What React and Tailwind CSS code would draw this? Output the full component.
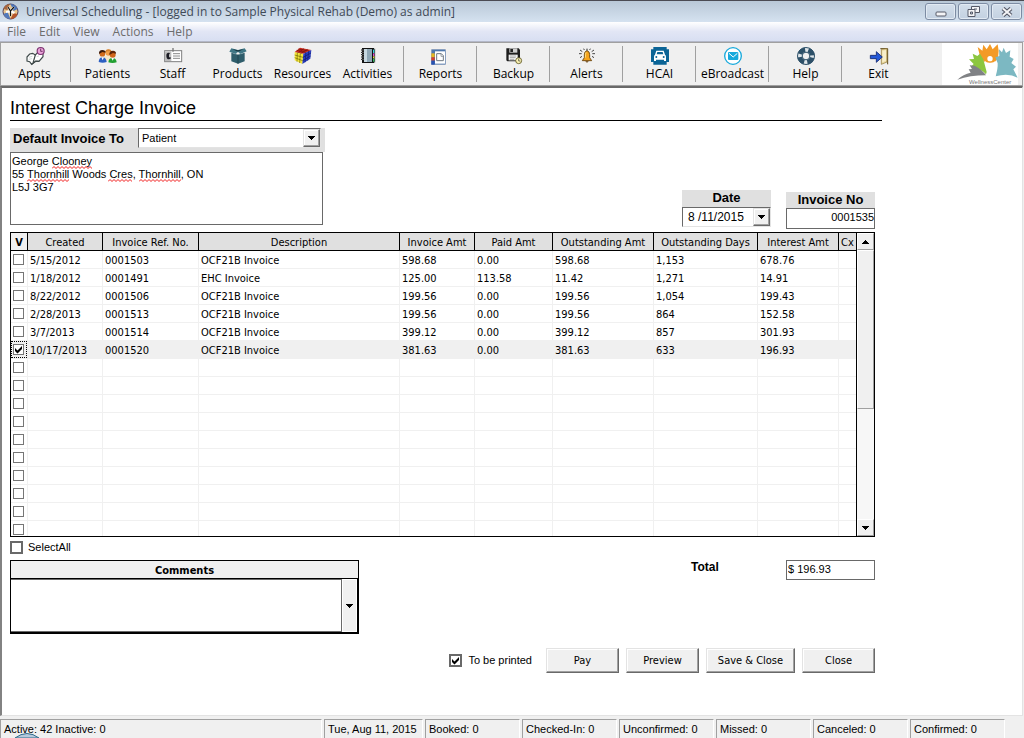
import React from "react";

const ICONS = {
  Appts: (
    <svg viewBox="72 138 60 60" className="size-5">
      <path d="M78 171 L86 162 L95 160 L103 165 L110 158 L126 157 L126 170 L114 184 L104 183 L92 193 L86 185 L78 183Z" fill="#fff" stroke="#3f4a4a" strokeWidth="3.500" />
      <path d="M103 165 L96 189 M92 193 L104 184 L114 184" stroke="#3f4a4a" strokeWidth="3.500" fill="none" />
      <path d="M84 172 L94 169 M83 178 L93 176 M107 170 L114 168" stroke="#b9c4c4" strokeWidth="2" />
      <circle cx="119" cy="153" r="10.5" fill="#e9a3d9" stroke="#7d3472" strokeWidth="3.500" />
      <path d="M119 146 V154 H125" stroke="#5b1f52" strokeWidth="2.5" fill="none" />
    </svg>
  ),
  Patients: (
    <svg viewBox="291 138 60 60" className="size-5">
      <path d="M307 168 h24 v14 h-24z" fill="#f7e7c8" />
      <circle cx="322" cy="158" r="9" fill="#f2a04a" />
      <path d="M312 157 q2 -10 11 -9 q9 1 9 8 l-7 -2 -6 0z" fill="#d8822c" />
      <path d="M293 186 q1 -14 11 -14 q12 0 13 14 q-12 5 -24 0z" fill="#2c5fc2" />
      <path d="M301 172 l4 9 4 -9z" fill="#fff" />
      <circle cx="304" cy="161" r="8.5" fill="#cf6a1c" />
      <path d="M294 162 q-1 -12 10 -12 q10 0 10 8 l-10 -2z" fill="#3a1a0a" />
      <path d="M322 187 q1 -13 12 -13 q12 0 13 13 q-12 4 -25 0z" fill="#22a032" />
      <path d="M331 174 l4 8 4 -8z" fill="#fff" />
      <circle cx="335" cy="164" r="9" fill="#d0651a" />
      <path d="M325 165 q-1 -13 11 -13 q10 1 9 9 l-9 -2z" fill="#5e2408" />
    </svg>
  ),
  Staff: (
    <svg viewBox="486 138 60 60" className="size-5">
      <rect x="491" y="152" width="51" height="33" fill="#fff" stroke="#7f7f7f" strokeWidth="3" />
      <path d="M516 144 v11" stroke="#777" strokeWidth="4" />
      <rect x="492" y="154" width="19" height="29" fill="#bdbdbd" />
      <path d="M507 159 q-11 -3 -11 8 q0 11 8 11 l5 -2 v-4 h-5 v-8z" fill="#1c1c24" />
      <path d="M516 161 h21 M516 168 h21 M516 175 h21" stroke="#8a8a8a" strokeWidth="3" />
    </svg>
  ),
  Products: (
    <svg viewBox="681 138 60 60" className="size-5">
      <path d="M691 158 L711 164 L731 158 V184 L711 191 L691 184Z" fill="#2f5d6b" />
      <path d="M711 164 V191" stroke="#204653" strokeWidth="3" />
      <path d="M691 145 L711 150 L731 145 L737 154 L718 162 L711 155 L704 162 L685 155Z" fill="#3f7685" />
      <path d="M694 147 L711 151 L728 147 L711 156Z" fill="#193a45" />
      <path d="M703 163 l8 -8 8 8" fill="none" stroke="#8fb4bf" strokeWidth="1.5" />
    </svg>
  ),
  Resources: (
    <svg viewBox="876 138 60 60" className="size-5">
      <path d="M881 156 L907 161 L904 192 L881 181Z" fill="#f4e63a" />
      <path d="M881 156 L897 143 L931 150 L907 161Z" fill="#c92a1e" />
      <path d="M907 161 L931 150 L928 176 L904 192Z" fill="#2a3fc0" />
      <path d="M889 157 L888 185 M898 159 L896 189 M881 165 L906 172 M881 173 L905 182" stroke="#6b6300" strokeWidth="2" />
      <path d="M887 151 L915 157 M892 147 L923 153 M892 158 L909 146 M900 160 L920 148" stroke="#6e0f0a" strokeWidth="2" />
      <path d="M915 157 L912 187 M923 153 L920 182 M906 172 L930 159 M905 182 L929 168" stroke="#101a66" strokeWidth="2" />
    </svg>
  ),
  Activities: (
    <svg viewBox="81 138 60 60" className="size-5">
      <rect x="93" y="144" width="36" height="45" fill="#111" />
      <rect x="99" y="147" width="24" height="39" fill="#8fa7b5" />
      <rect x="99" y="147" width="9" height="39" fill="#c8d8e0" />
      <path d="M90 150 h7 M90 157 h7 M90 164 h7 M90 171 h7 M90 178 h7" stroke="#111" strokeWidth="3" />
      <path d="M94 150 h4 M94 157 h4 M94 164 h4 M94 171 h4 M94 178 h4" stroke="#fff" strokeWidth="1.5" />
      <rect x="126" y="149" width="5" height="10" fill="#35d6e0" />
      <rect x="126" y="160" width="5" height="8" fill="#e04bd0" />
      <rect x="126" y="169" width="5" height="6" fill="#f0e040" />
      <rect x="126" y="176" width="5" height="9" fill="#30c060" />
      <path d="M131 146 v42" stroke="#111" strokeWidth="2" />
    </svg>
  ),
  Reports: (
    <svg viewBox="303 138 60 60" className="size-5">
      <rect x="301" y="146" width="48" height="50" fill="#fff3ea" />
      <rect x="304" y="148" width="43" height="46" fill="#4f78ac" />
      <rect x="304" y="160" width="10" height="12" fill="#e8b820" />
      <rect x="304" y="172" width="10" height="10" fill="#d8402a" />
      <rect x="304" y="182" width="10" height="12" fill="#2a52b0" />
      <rect x="315" y="154" width="30" height="37" fill="#fff" />
      <path d="M320 161 H334 L340 167 V182 H320Z" fill="#fff" stroke="#6e7781" strokeWidth="3" />
      <path d="M333 161 v8 h7" fill="none" stroke="#6e7781" strokeWidth="2" />
    </svg>
  ),
  Backup: (
    <svg viewBox="519 138 60 60" className="size-5">
      <path d="M526 145 H563 L567 149 V184 H529 L526 181Z" fill="#1e1e1e" />
      <rect x="535" y="145" width="24" height="13" fill="#cfcfcf" />
      <rect x="538" y="147" width="8" height="9" fill="#222" />
      <rect x="533" y="164" width="27" height="17" fill="#fff" />
      <path d="M536 168 h20 M536 173 h18 M536 178 h14" stroke="#777" strokeWidth="2" />
      <circle cx="563" cy="182" r="9" fill="#fbf3b5" stroke="#5a5320" strokeWidth="2.5" />
      <path d="M563 176 v7 h5" stroke="#333" strokeWidth="2" fill="none" />
    </svg>
  ),
  Alerts: (
    <svg viewBox="738 138 60 60" className="size-5">
      <path d="M768 152 q-8 2 -8 12 v9 l-6 9 h28 l-6 -9 v-9 q0 -10 -8 -12z" fill="#f5a41c" stroke="#5e3a08" strokeWidth="2.5" />
      <path d="M765 157 q-2 5 -2 16" stroke="#ffdf80" strokeWidth="3" fill="none" />
      <path d="M763 184 q5 7 10 0z" fill="#5e3a08" />
      <path d="M768 146 v6" stroke="#222" strokeWidth="3" />
      <path d="M747 150 l7 5 M744 161 h8 M747 173 l6 -4 M789 150 l-7 5 M792 161 h-8 M789 173 l-6 -4 M758 146 l2 4 M778 146 l-2 4" stroke="#222" strokeWidth="2.5" />
    </svg>
  ),
  HCAI: (
    <svg viewBox="957 138 60 60" className="size-5">
      <path d="M967 141 H1007 V148 H1014 V186 H1007 V194 H967 V186 H960 V148 H967Z" fill="#0b6496" />
      <path d="M976 152 H998 L1002 164 Q1005 166 1005 170 V183 H999 V179 H975 V183 H969 V170 Q969 166 972 164Z" fill="#fff" />
      <path d="M979 156 H995 L997 163 H977Z" fill="#0b6496" />
      <circle cx="976" cy="171" r="3" fill="#0b6496" />
      <circle cx="998" cy="171" r="3" fill="#0b6496" />
    </svg>
  ),
  eBroadcast: (
    <svg viewBox="156 138 60 60" className="size-5">
      <circle cx="186" cy="168" r="25" fill="#fff" stroke="#17a9dc" strokeWidth="4" />
      <rect x="171" y="156" width="31" height="24" rx="3" fill="#17a9dc" />
      <path d="M174 160 L186.500 171 L199 160" fill="none" stroke="#fff" strokeWidth="3" />
    </svg>
  ),
  Help: (
    <svg viewBox="375 138 60 60" className="size-5">
      <circle cx="405" cy="168" r="19" fill="none" stroke="#dfe6ea" strokeWidth="14" />
      <circle cx="405" cy="168" r="19" fill="none" stroke="#2d5068" strokeWidth="14" strokeDasharray="19.850 10" strokeDashoffset="-5" />
      <circle cx="405" cy="168" r="25.500" fill="none" stroke="#2d5068" strokeWidth="3" />
      <circle cx="405" cy="168" r="11.500" fill="#f0f0f0" stroke="#2d5068" strokeWidth="3" />
    </svg>
  ),
  Exit: (
    <svg viewBox="594 138 60 60" className="size-5">
      <path d="M628 146 H650 V193" fill="none" stroke="#5c4716" strokeWidth="3" />
      <path d="M631 148 L648 146 V186 L631 193Z" fill="#ead9a0" stroke="#8a7030" strokeWidth="2" />
      <path d="M634 152 l11 -2 v32 l-11 5z" fill="#f7eecb" />
      <path d="M598 166 H616 V155 L634 171 L616 187 V176 H598Z" fill="#2458d8" stroke="#10256e" strokeWidth="2.5" />
    </svg>
  ),
};

const TOOL_GROUPS = [
  ["Appts"],
  ["Patients", "Staff", "Products", "Resources", "Activities"],
  ["Reports"],
  ["Backup"],
  ["Alerts"],
  ["HCAI"],
  ["eBroadcast"],
  ["Help"],
  ["Exit"],
];

const COLUMNS = [
  { name: "Created", width: "w-[75px]" },
  { name: "Invoice Ref. No.", width: "w-[96px]" },
  { name: "Description", width: "" },
  { name: "Invoice Amt", width: "w-[75px]" },
  { name: "Paid Amt", width: "w-[78px]" },
  { name: "Outstanding Amt", width: "w-[101px]" },
  { name: "Outstanding Days", width: "w-[104px]" },
  { name: "Interest Amt", width: "w-[81px]" },
  { name: "Cx", width: "w-[17px]" },
];

const INVOICES = [
  ["5/15/2012", "0001503", "OCF21B Invoice", "598.68", "0.00", "598.68", "1,153", "678.76", ""],
  ["1/18/2012", "0001491", "EHC Invoice", "125.00", "113.58", "11.42", "1,271", "14.91", ""],
  ["8/22/2012", "0001506", "OCF21B Invoice", "199.56", "0.00", "199.56", "1,054", "199.43", ""],
  ["2/28/2013", "0001513", "OCF21B Invoice", "199.56", "0.00", "199.56", "864", "152.58", ""],
  ["3/7/2013", "0001514", "OCF21B Invoice", "399.12", "0.00", "399.12", "857", "301.93", ""],
  ["10/17/2013", "0001520", "OCF21B Invoice", "381.63", "0.00", "381.63", "633", "196.93", ""],
];

const SELECTED = 5;
const BLANK = ["", "", "", "", "", "", "", "", ""];
const ROWS = INVOICES.concat(Array.from({ length: 10 }, () => BLANK));

const STATUS = ["Booked: 0", "Checked-In: 0", "Unconfirmed: 0", "Missed: 0", "Canceled: 0", "Confirmed: 0"];

function Arrow({ up = false }) {
  return (
    <svg viewBox="0 0 7 4" className="h-1 w-[7px]" shapeRendering="crispEdges" aria-hidden="true">
      <path d={up ? "M3 0h1v1h1v1h1v1h1v1H0V3h1V2h1V1h1z" : "M0 0h7v1H6v1H5v1H4v1H3V3H2V2H1V1H0z"} fill="#000" />
    </svg>
  );
}

function Tick({ className, ...props }) {
  return (
    <span className="relative inline-flex shrink-0">
      <input
        type="checkbox"
        className={"peer appearance-none bg-white " + className}
        {...props}
      />
      <svg viewBox="0 0 9 9" className="pointer-events-none absolute inset-0 m-auto hidden size-[9px] peer-checked:block" aria-hidden="true">
        <path d="M1 3v3l2.500 2.500L8 4V1L3.500 5.500z" fill="#000" />
      </svg>
    </span>
  );
}

function Squiggle({ className }) {
  return (
    <span className={"pointer-events-none absolute h-[3px] overflow-hidden " + className} aria-hidden="true">
      <svg viewBox="0 0 60 3" className="h-[3px] w-[60px]">
        <path d={"M0 2.500" + " l2 -2 l2 2".repeat(15)} fill="none" stroke="#f01818" strokeWidth="1" />
      </svg>
    </span>
  );
}

const RAISED =
  "border border-t-[#e3e3e3] border-l-[#e3e3e3] border-r-[#696969] border-b-[#696969] bg-[#f0f0f0] shadow-[inset_-1px_-1px_0_#a0a0a0,inset_1px_1px_0_#fff]";

const SCROLL_PART =
  "border border-white border-r-[#a0a0a0] border-b-[#a0a0a0] bg-[#f0f0f0]";

function PushButton({ children, wide = false }) {
  return (
    <button type="button" className={"h-[25px] font-['DejaVu_Sans_Condensed','Noto_Sans',sans-serif] text-[11px] " + (wide ? "w-[89px] " : "w-[73px] ") + RAISED}>
      {children}
    </button>
  );
}

function WindowButton({ label, children }) {
  return (
    <button type="button" aria-label={label} className="flex h-[17px] w-[31px] items-center justify-center rounded-[3px] border border-[#7d8ca3] bg-linear-to-b from-[#d3deea] to-[#c3d1e1] shadow-[inset_0_0_0_1px_#e2eaf3]">
      {children}
    </button>
  );
}

function StatusCell({ className, children }) {
  return (
    <div className={"overflow-hidden border-t border-r border-l border-[#a0a0a0] border-r-white pt-[3px] whitespace-nowrap " + className}>{children}</div>
  );
}

export default function App() {
  return (
    <div className="flex min-h-screen flex-col bg-[#f0f0f0] font-['Liberation_Sans',Arial,sans-serif] text-[11px] leading-[13px] text-black">
      <header className="font-['Open_Sans','Noto_Sans',sans-serif] text-[12px] leading-4">
        <div className="flex h-[22px] items-center border-t border-[#4b4b53] bg-linear-to-b from-[#b9c8d7] to-[#d5e2f0] pr-[2px] pl-[2px]">
          <svg viewBox="0 0 17 17" className="size-[17px]" aria-hidden="true">
            <circle cx="8.500" cy="8.500" r="7.500" fill="#e9c58d" stroke="#54405a" />
            <path d="M8.500 1a7.500 7.500 0 0 1 7 5l-4 2z" fill="#4a73b8" />
            <path d="M1.500 11l4-2 3 7a7.500 7.500 0 0 1-7-5z" fill="#5279bb" />
            <path d="M15.500 11l-4-1-3 6a7.500 7.500 0 0 0 7-5z" fill="#b5552b" />
            <path d="M1.500 6l4 1 2-6a7.500 7.500 0 0 0-6 5z" fill="#a7653d" />
            <path d="M6 4l2.500 4L12 4M8.500 8v5M4 9l4.500-1 4 2" stroke="#fff" strokeWidth="2" fill="none" />
            <path d="M6 4l2.500 4L12 4M8.500 8v5" stroke="#111" strokeWidth="1.200" fill="none" />
          </svg>
          <h1 className="ml-[7px] flex-1 truncate text-[#3f4a57]">Universal Scheduling - [logged in to Sample Physical Rehab (Demo) as admin]</h1>
          <div className="flex gap-[2px]">
            <WindowButton label="Minimize">
              <svg viewBox="0 0 12 6" className="mt-1 h-[6px] w-3"><rect x="1" y="1" width="10" height="4" rx="1" fill="#f4f4f6" stroke="#565a68" /></svg>
            </WindowButton>
            <WindowButton label="Restore">
              <svg viewBox="0 0 13 11" className="h-[11px] w-[13px]">
                <path d="M4.500 .5h8v6h-8z" fill="#f4f4f6" stroke="#565a68" />
                <path d="M7 3h3" stroke="#565a68" />
                <path d="M1 3.500h7v7H1z" fill="#f4f4f6" stroke="#565a68" />
                <path d="M3.500 6h2v2h-2z" fill="#c5d2e1" stroke="#565a68" />
              </svg>
            </WindowButton>
            <WindowButton label="Close window">
              <svg viewBox="0 0 12 10" className="h-[10px] w-3">
                <path d="M2 1.500l8 7M10 1.500l-8 7" stroke="#565a68" strokeWidth="4.200" />
                <path d="M2 1.500l8 7M10 1.500l-8 7" stroke="#f4f4f6" strokeWidth="2" />
              </svg>
            </WindowButton>
          </div>
        </div>

        <nav className="flex h-5 items-center gap-[13px] border-b border-[#b4b8c8] bg-linear-to-b from-white via-[#e2e6f5] to-[#d8dff2] pl-[7px] text-[#6d6d6d]">
          {["File", "Edit", "View", "Actions", "Help"].map((m) => (
            <button type="button" key={m}>{m}</button>
          ))}
        </nav>

        <div className="mr-px flex h-[44px] border border-[#a0a0a0] bg-[#f0f0f0] pl-px">
          {TOOL_GROUPS.map((group, g) => (
            <React.Fragment key={group[0]}>
              {g > 0 && <div className="flex w-2 py-[3px] pl-[3px]"><div className="w-px bg-[#a0a0a0]" /></div>}
              {group.map((name) => (
                <button type="button" key={name} className="flex w-[65px] flex-col items-center pt-[3px] whitespace-nowrap">
                  {ICONS[name]}
                  <span>{name}</span>
                </button>
              ))}
            </React.Fragment>
          ))}
          <div className="mr-1 ml-auto bg-white">
            <svg viewBox="36 129 228 123" className="h-[41px] w-[76px]">
              <path d="M143 141 L157 152 L160 134 L170 148 L180 132 L188 148 L203 133 L206 152 L204 174 L192 190 H170 L152 176Z" fill="#f39a26" />
              <path d="M117 178 L132 177 L128 161 L142 168 L150 161 L160 178 L170 216 L168 223 Q152 205 122 201 L131 192Z" fill="#8cc63f" />
              <path d="M82 239 Q100 222 122 218 L116 208 L126 207 L119 196 L134 197 Q158 210 168 226 Q120 226 82 239Z" fill="#808285" />
              <path d="M197 229 Q204 205 203 190 L196 172 L208 168 L207 148 L216 157 L221 143 L228 159 L241 151 L239 170 L251 177 L244 189 L258 200 L250 208 L263 233 Q235 218 197 229Z" fill="#7cb8c2" />
              <circle cx="180" cy="176" r="8" fill="#fff" />
              <path d="M164 182 Q170 189 180 188 Q190 189 197 182 Q196 192 188 198 Q196 212 197 229 H172 Q174 205 171 196 Q164 190 164 182Z" fill="#fff" />
              <text x="117" y="252" fontSize="18" fill="#777" fontFamily="Liberation Sans, sans-serif">WellnessCenter</text>
            </svg>
          </div>
        </div>
      </header>

      <main className="mr-px mb-px flex-1 border-t-2 border-r border-b border-l-2 border-t-[#696969] border-r-[#e3e3e3] border-b-[#e3e3e3] border-l-[#828282] bg-white pl-2">
        <h2 className="mr-[139px] flex h-[33px] max-w-[872px] items-center border-b border-black pt-2 text-[18px] leading-5">Interest Charge Invoice</h2>

        <form className="max-w-[865px]" onSubmit={(e) => e.preventDefault()}>
          <div className="mt-[7px] flex items-end">
            <div className="mb-[7px] w-[315px]">
              <div className="flex h-6 bg-[#e0e0e0] pr-1 pb-1">
                <label htmlFor="invoice-to" className="flex-1 pt-[4px] pl-[3px] text-[13px] font-bold">Default Invoice To</label>
                <div className="relative w-[183px] border border-[#e3e3e3] border-t-[#696969] border-l-[#696969] bg-white">
                  <select id="invoice-to" className="h-full w-full appearance-none pl-[3px]" defaultValue="Patient">
                    <option>Patient</option>
                  </select>
                  <span className={"pointer-events-none absolute inset-y-0 right-0 flex w-[17px] items-center justify-center " + RAISED}><Arrow /></span>
                </div>
              </div>
              <div className="relative mr-[2px]">
                <textarea
                  aria-label="Billing address"
                  spellCheck={false}
                  className="block h-[73px] w-full resize-none border border-[#696969] px-px pt-[2px] leading-[13px]"
                  defaultValue={"George Clooney\n55 Thornhill Woods Cres, Thornhill, ON\nL5J 3G7"}
                />
                <Squiggle className="top-[14px] left-[42px] w-[40px]" />
                <Squiggle className="top-[27px] left-[17px] w-[42px]" />
                <Squiggle className="top-[27px] left-[98px] w-[24px]" />
                <Squiggle className="top-[27px] left-[129px] w-[42px]" />
              </div>
            </div>

            <div className="ml-auto flex items-end gap-[15px]">
              <div className="mb-[5px] w-[89px]">
                <label htmlFor="invoice-date" className="block h-[17px] bg-[#e0e0e0] pt-px text-center text-[13px] font-bold">Date</label>
                <div className="flex h-5 border border-[#e3e3e3] border-t-[#696969] border-l-[#696969] bg-white">
                  <input id="invoice-date" type="text" defaultValue="8 /11/2015" className="min-w-0 flex-1 pl-[5px] text-[12px]" />
                  <button type="button" aria-label="Open calendar" className={"flex w-[17px] items-center justify-center " + RAISED}><Arrow /></button>
                </div>
              </div>
              <div className="mb-[3px] w-[89px]">
                <label htmlFor="invoice-no" className="block h-4 bg-[#e0e0e0] pt-px text-center text-[13px] font-bold">Invoice No</label>
                <input id="invoice-no" type="text" defaultValue="0001535" className="block h-[21px] w-full border border-[#696969] bg-white pb-[3px] text-right" />
              </div>
            </div>
          </div>

          <div className="flex h-[305px] overflow-hidden border border-black font-['DejaVu_Sans_Condensed','Noto_Sans',sans-serif]">
            <div className="min-w-0 flex-1 overflow-hidden">
              <table className="w-full table-fixed border-separate border-spacing-0">
                <thead>
                  <tr className="h-[18px] bg-[#e0e0e0]">
                    <th className="w-[17px] border-r border-b border-black bg-[#f0f0f0] p-0 pt-[2px]">V</th>
                    {COLUMNS.map((c) => (
                      <th key={c.name} className={"overflow-hidden border-b border-black p-0 pt-[2px] font-normal whitespace-nowrap [&:not(:last-child)]:border-r " + c.width}>{c.name}</th>
                    ))}
                  </tr>
                </thead>
                <tbody>
                  {ROWS.map((row, r) => (
                    <tr key={r} className={"h-[18px] " + (r === SELECTED ? "bg-[#f0f0f0]" : "bg-white")}>
                      <td className="border-r border-b border-[#f0f0f0] p-0 leading-none">
                        <div className={"flex h-[17px] items-center " + (r === SELECTED ? "border border-dotted border-black pl-px" : "pl-[2px]")}>
                          <Tick aria-label={"Select row " + (r + 1)} defaultChecked={r === SELECTED} className="size-[11px] border border-[#767676]" />
                        </div>
                      </td>
                      {row.map((cell, c) => (
                        <td key={c} className="border-b border-[#f0f0f0] py-0 pt-[2px] pr-0 pl-[2px] whitespace-nowrap [&:not(:last-child)]:border-r">{cell}</td>
                      ))}
                    </tr>
                  ))}
                </tbody>
              </table>
            </div>
            <div className="flex w-[18px] flex-col border-l border-black bg-[#f7f7f7]">
              <button type="button" aria-label="Scroll up" className={"flex h-[17px] items-center justify-center " + SCROLL_PART}><Arrow up /></button>
              <div className={"h-[159px] " + SCROLL_PART} />
              <button type="button" aria-label="Scroll down" className={"mt-auto flex h-[17px] items-center justify-center " + SCROLL_PART}><Arrow /></button>
            </div>
          </div>

          <label className="flex h-5 items-center gap-[5px]">
            <Tick className="size-[13px] border-2 border-[#696969]" />
            SelectAll
          </label>

          <div className="mt-[3px] flex items-start">
            <div className="w-[349px] border border-black">
              <label htmlFor="comments" className="block h-[18px] border-b border-black bg-[#f0f0f0] pt-[3px] text-center font-['DejaVu_Sans_Condensed','Noto_Sans',sans-serif] font-bold">Comments</label>
              <div className="flex h-[54px] border-r border-b border-black">
                <textarea id="comments" className="block min-w-0 flex-1 resize-none border border-l-0 border-[#696969] bg-white" />
                <button type="button" aria-label="Expand comments" className="flex w-[15px] items-center justify-center border border-white bg-[#f0f0f0]"><Arrow /></button>
              </div>
            </div>
            <label htmlFor="total" className="mt-px ml-auto w-[95px] text-[12px] font-bold">Total</label>
            <input id="total" type="text" defaultValue="$ 196.93" className="h-5 w-[89px] border border-[#696969] bg-white pb-[3px] pl-px" />
          </div>

          <div className="mt-[14px] flex items-center justify-end gap-[7px]">
            <label className="mr-[7px] flex items-center gap-[6px]">
              <Tick defaultChecked className="size-[13px] border-2 border-[#696969]" />
              To be printed
            </label>
            <PushButton>Pay</PushButton>
            <PushButton>Preview</PushButton>
            <PushButton wide>Save &amp; Close</PushButton>
            <PushButton>Close</PushButton>
          </div>
        </form>
      </main>

      <footer className="relative flex h-[21px] gap-[2px] pt-[2px]">
        <StatusCell className="flex-1 pl-[3px]">Active: 42 Inactive: 0</StatusCell>
        <StatusCell className="w-[99px] pl-[3px]">Tue, Aug 11, 2015</StatusCell>
        {STATUS.map((s) => (
          <StatusCell key={s} className="w-[95px] pl-[3px]">{s}</StatusCell>
        ))}
        <div className="w-[17px]" />
        <svg viewBox="0 0 24 5" className="pointer-events-none absolute bottom-0 left-[15px] h-[5px] w-6" aria-hidden="true">
          <path d="M0 5Q12-4 24 5z" fill="#b5c9dc" stroke="#2d6a8a" />
        </svg>
      </footer>
    </div>
  );
}
